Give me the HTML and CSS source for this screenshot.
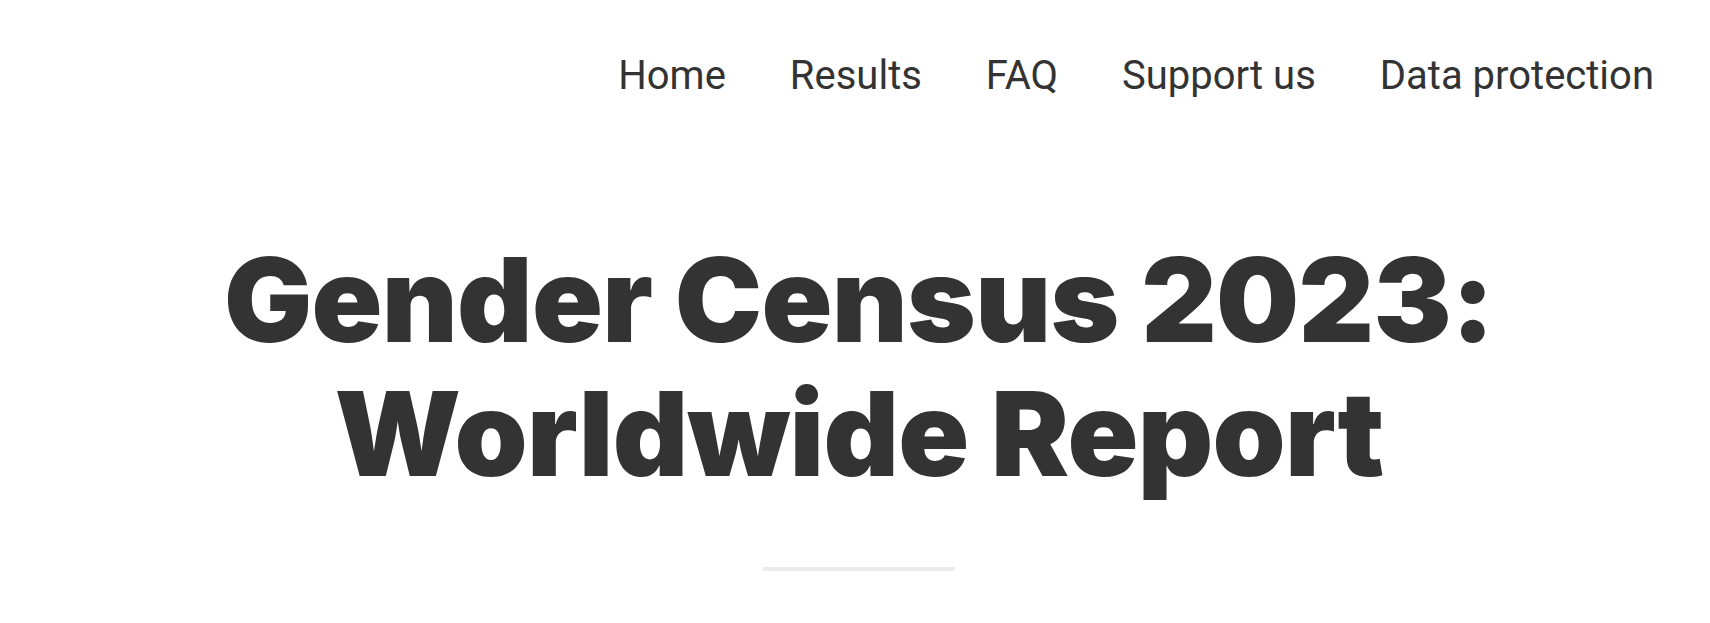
FILE: index.html
```html
<!DOCTYPE html>
<html lang="en">
<head>
<meta charset="utf-8">
<title>Gender Census 2023: Worldwide Report</title>
<link rel="stylesheet" href="styles.css">
</head>
<body>
<header class="site-header">
  <nav class="nav">
    <a class="nav-link" href="#">Home</a>
    <a class="nav-link" href="#">Results</a>
    <a class="nav-link" href="#">FAQ</a>
    <a class="nav-link" href="#">Support us</a>
    <a class="nav-link" href="#">Data protection</a>
  </nav>
</header>
<main class="hero">
  <h1 class="title">Gender Census 2023:<br>Worldwide Report</h1>
  <hr class="divider">
</main>
</body>
</html>
```
FILE: styles.css
```css
html, body {
  margin: 0;
  padding: 0;
  background: #ffffff;
}
body {
  color: #333333;
  font-family: Roboto, "Liberation Sans", sans-serif;
}
.site-header {
  display: flex;
  justify-content: flex-end;
  padding: 54px 56px 0 0;
}
.nav {
  display: flex;
  gap: 64px;
}
.nav-link {
  font-family: Roboto, "Liberation Sans", sans-serif;
  font-size: 40px;
  line-height: 44px;
  font-weight: 400;
  color: #333333;
  text-decoration: none;
}
.hero {
  display: flex;
  flex-direction: column;
  align-items: center;
  padding-left: 8px;
}
.title {
  margin: 135px 0 0 0;
  font-family: Inter, Roboto, sans-serif;
  font-weight: 900;
  font-size: 117px;
  line-height: 134px;
  letter-spacing: -0.7px;
  text-align: center;
  color: #333333;
}
.divider {
  margin: 66px 0 0 0;
  width: 192px;
  height: 4px;
  border: 0;
  background: #ebebeb;
}
```
